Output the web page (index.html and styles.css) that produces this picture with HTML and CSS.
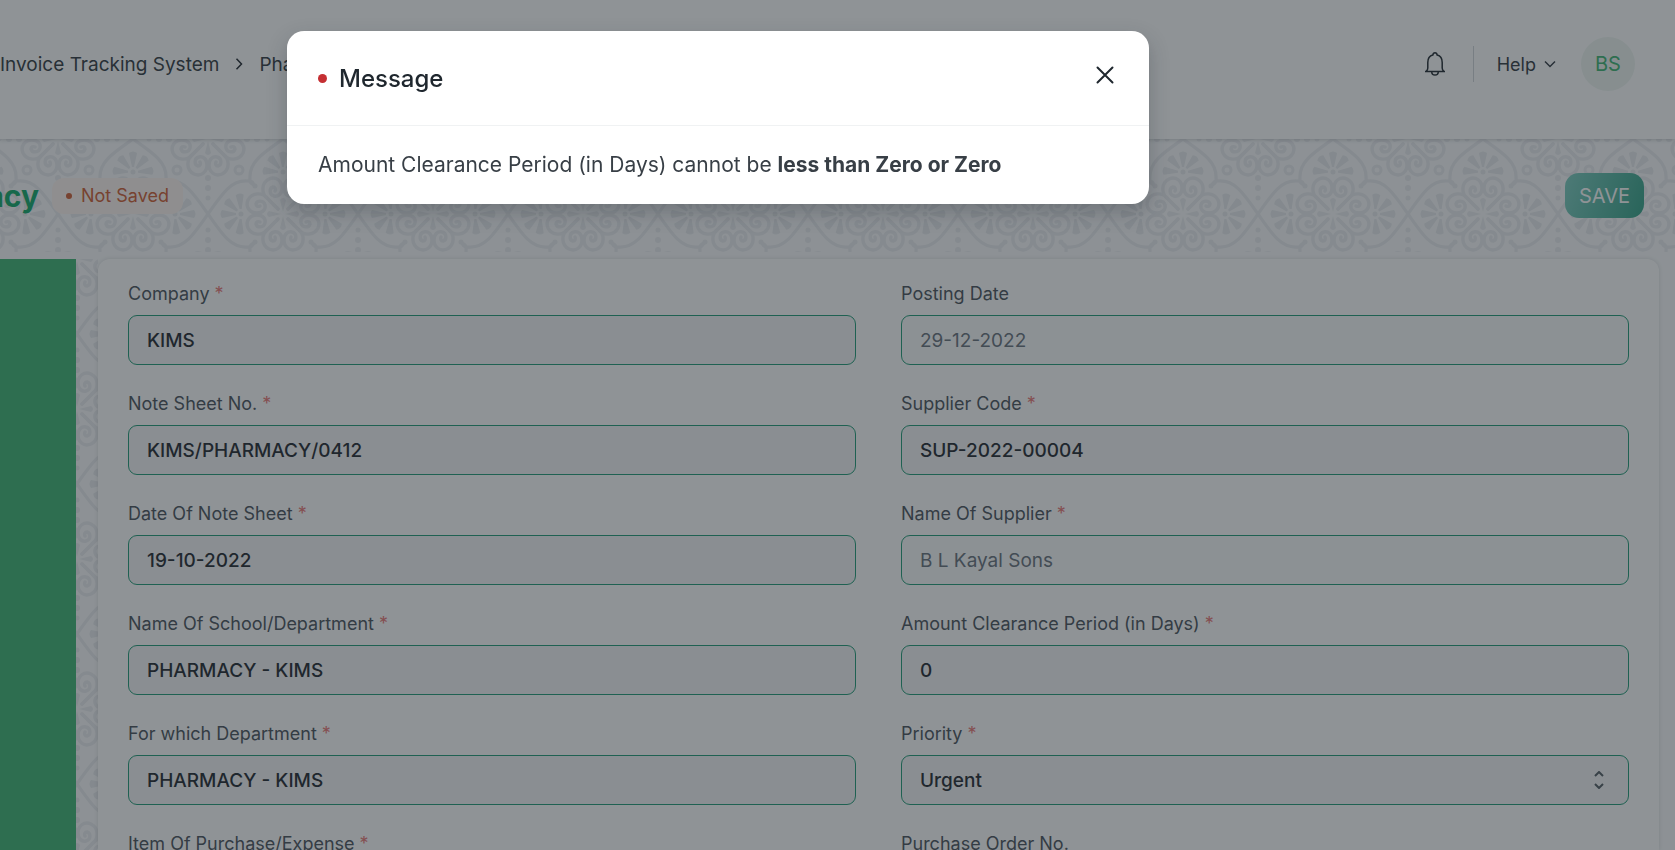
FILE: index.html
```html
<!DOCTYPE html>
<html lang="en">
<head>
<meta charset="utf-8">
<meta name="viewport" content="width=device-width, initial-scale=1">
<title>Invoice Tracking System</title>
<link rel="stylesheet" href="styles.css">
</head>
<body>
<div class="page">
  <header class="topbar">
    <nav class="breadcrumb" aria-label="Breadcrumb">
      <a href="#">Invoice Tracking System</a>
      <svg class="crumb-arrow" viewBox="0 0 8 14" aria-hidden="true"><path d="M1.5 1.8 6.5 7l-5 5.2"/></svg>
      <a href="#">Pharmacy</a>
    </nav>
    <div class="tools">
      <button class="bell" type="button" aria-label="Notifications">
        <svg viewBox="0 0 22 26" aria-hidden="true"><path d="M1 20.5h20M2.2 20.3c1.2-1 1.6-1.8 1.6-3.3v-5.6c0-3.600 1.600-6.400 5-7.300.2-1.500 1-2.300 2.200-2.300s2 .8 2.200 2.300c3.400.9 5 3.700 5 7.300V17c0 1.500.4 2.300 1.600 3.300M7.700 20.700a3.300 3.300 0 0 0 6.600 0"/></svg>
      </button>
      <span class="divider"></span>
      <button class="help" type="button">Help
        <svg viewBox="0 0 12 8" aria-hidden="true"><path d="M1 1.500l5 5 5-5"/></svg>
      </button>
      <button class="avatar" type="button">BS</button>
    </div>
  </header>

  <section class="page-head">
    <div class="head-left">
      <h1 class="title">acy</h1>
      <span class="status">Not Saved</span>
    </div>
    <button class="save" type="button">SAVE</button>
  </section>

  <main class="body">
    <aside class="sidebar"></aside>
    <div class="gutter"></div>
    <form class="card">
      <div class="field">
        <label for="company">Company <i>*</i></label>
        <input id="company" type="text" value="KIMS">
      </div>
      <div class="field">
        <label for="posting">Posting Date</label>
        <input id="posting" type="text" value="29-12-2022" readonly>
      </div>
      <div class="field">
        <label for="sheet">Note Sheet No. <i>*</i></label>
        <input id="sheet" type="text" value="KIMS/PHARMACY/0412">
      </div>
      <div class="field">
        <label for="supcode">Supplier Code <i>*</i></label>
        <input id="supcode" type="text" value="SUP-2022-00004">
      </div>
      <div class="field">
        <label for="sheetdate">Date Of Note Sheet <i>*</i></label>
        <input id="sheetdate" type="text" value="19-10-2022">
      </div>
      <div class="field">
        <label for="supname">Name Of Supplier <i>*</i></label>
        <input id="supname" type="text" value="B L Kayal Sons" readonly>
      </div>
      <div class="field">
        <label for="school">Name Of School/Department <i>*</i></label>
        <input id="school" type="text" value="PHARMACY - KIMS">
      </div>
      <div class="field">
        <label for="period">Amount Clearance Period (in Days) <i>*</i></label>
        <input id="period" type="text" value="0">
      </div>
      <div class="field">
        <label for="dept">For which Department <i>*</i></label>
        <input id="dept" type="text" value="PHARMACY - KIMS">
      </div>
      <div class="field">
        <label for="priority">Priority <i>*</i></label>
        <div class="select">
          <select id="priority"><option>Urgent</option></select>
          <svg viewBox="0 0 10 18" aria-hidden="true"><path d="M1 5l4-4 4 4M1 13l4 4 4-4"/></svg>
        </div>
      </div>
      <div class="field">
        <label for="item">Item Of Purchase/Expense <i>*</i></label>
        <input id="item" type="text">
      </div>
      <div class="field">
        <label for="po">Purchase Order No.</label>
        <input id="po" type="text">
      </div>
    </form>
  </main>
</div>

<div class="backdrop">
  <div class="dialog" role="dialog" aria-modal="true" aria-labelledby="dialog-title">
    <div class="dialog-head">
      <h2 id="dialog-title">Message</h2>
      <button class="close" type="button" aria-label="Close">
        <svg viewBox="0 0 18 18" aria-hidden="true"><path d="M1.500 1.500l15 15M16.500 1.500l-15 15"/></svg>
      </button>
    </div>
    <p class="dialog-text">Amount Clearance Period (in Days) cannot be <b>less than Zero or Zero</b></p>
  </div>
</div>
</body>
</html>
```

FILE: styles.css
```css
:root {
  --ink: #1f272e;
  --label: #48515a;
  --accent: #1f9b76;
  --ornament: url("data:image/svg+xml,%3Csvg xmlns='http://www.w3.org/2000/svg' xmlns:xlink='http://www.w3.org/1999/xlink' width='150' height='150' viewBox='0 0 150 150'%3E%3Cdefs%3E%3Cg id='h' fill='none' stroke='%23ebecf0' stroke-width='3.400' stroke-linecap='round'%3E%3Cpath d='M5-5 15-15C20-22 31-22 35-14C38-7 33-1 26-1C20-1 17-5 18-9C19-14 26-14 27-10C27-8 25-7 23-8'/%3E%3C/g%3E%3Cg id='a'%3E%3Cuse xlink:href='%23h'/%3E%3Cuse xlink:href='%23h' transform='scale(1 -1)'/%3E%3Cpath d='M2 0 14-3Q18 0 14 3Z' fill='%23ebecf0'/%3E%3C/g%3E%3Cg id='m'%3E%3Cuse xlink:href='%23a'/%3E%3Cuse xlink:href='%23a' transform='rotate(90)'/%3E%3Cuse xlink:href='%23a' transform='rotate(180)'/%3E%3Cuse xlink:href='%23a' transform='rotate(270)'/%3E%3C/g%3E%3Cpath id='p' d='M5-1 19-4Q22 0 19 4L5 1Z'/%3E%3Cg id='f'%3E%3Cg fill='%23e8eaee' transform='translate(42 0)'%3E%3Ccircle r='2.500'/%3E%3Cuse xlink:href='%23p'/%3E%3Cuse xlink:href='%23p' transform='rotate(42)'/%3E%3Cuse xlink:href='%23p' transform='rotate(-42)'/%3E%3Cuse xlink:href='%23p' transform='rotate(86)'/%3E%3Cuse xlink:href='%23p' transform='rotate(-86)'/%3E%3C/g%3E%3Cpath d='M29-28Q30-34 36-33C52-34 61-20 75 0C61 20 52 34 36 33Q30 34 29 28' fill='none' stroke='%23ebecf0' stroke-width='3.200'/%3E%3Ccircle cx='28' cy='-28' r='2.500' fill='%23ebecf0'/%3E%3Ccircle cx='44' cy='-44' r='4' fill='none' stroke='%23ebecf0' stroke-width='3'/%3E%3Cg fill='%23ebecf0'%3E%3Ccircle cx='75' cy='-36' r='3'/%3E%3Ccircle cx='75' cy='-26' r='3'/%3E%3Ccircle cx='75' cy='-16' r='2.500'/%3E%3Ccircle cx='75' cy='36' r='3'/%3E%3Ccircle cx='75' cy='26' r='3'/%3E%3Ccircle cx='75' cy='16' r='2.500'/%3E%3C/g%3E%3C/g%3E%3C/defs%3E%3Cuse xlink:href='%23m' x='75' y='75'/%3E%3Cuse xlink:href='%23m'/%3E%3Cuse xlink:href='%23m' x='150'/%3E%3Cuse xlink:href='%23m' y='150'/%3E%3Cuse xlink:href='%23m' x='150' y='150'/%3E%3Cg transform='translate(75 75)'%3E%3Cuse xlink:href='%23f'/%3E%3Cuse xlink:href='%23f' transform='rotate(90)'/%3E%3Cuse xlink:href='%23f' transform='rotate(180)'/%3E%3Cuse xlink:href='%23f' transform='rotate(270)'/%3E%3C/g%3E%3C/svg%3E");
}

* { box-sizing: border-box; }

body {
  margin: 0;
  height: 100vh;
  overflow: hidden;
  background: #fafbfc;
  color: var(--ink);
  font-family: Inter, "Noto Sans", sans-serif;
  font-size: 19px;
}

button, input, select { font: inherit; color: inherit; }
button { border: 0; background: none; padding: 0; }
svg { fill: none; stroke: currentColor; display: block; }

.page {
  height: 100vh;
  display: flex;
  flex-direction: column;
  overflow: hidden;
}

/* Top bar */
.topbar {
  flex: none;
  height: 139px;
  padding: 0 40px 11px 0;
  display: flex;
  align-items: center;
  justify-content: space-between;
  background: #fff;
  box-shadow: 0 1px 4px rgba(31, 39, 46, 0.2);
  position: relative;
}
.breadcrumb { display: flex; align-items: center; gap: 16px; }
.breadcrumb a { color: #313940; text-decoration: none; }
.crumb-arrow { width: 8px; height: 14px; stroke-width: 1.5; }
.tools { display: flex; align-items: center; }
.bell svg { width: 22px; height: 26px; stroke-width: 1.5; }
.divider { width: 1px; height: 36px; margin: 0 23px 0 27px; background: #d1d5d9; }
.help { display: flex; align-items: center; gap: 8px; font-size: 18px; color: #313940; }
.help svg { width: 12px; height: 8px; stroke-width: 1.5; }
.avatar {
  width: 54px;
  height: 54px;
  margin-left: 25px;
  border-radius: 50%;
  background: #eef5f1;
  color: #3db572;
  font-size: 20px;
}

/* Page heading */
.page-head {
  flex: none;
  height: 113px;
  padding: 0 31px 0 0;
  display: flex;
  align-items: center;
  justify-content: space-between;
  background: var(--ornament) 58px 0;
}
.head-left { display: flex; align-items: center; gap: 13px; }
.title {
  width: 39px;
  margin: 0;
  display: flex;
  justify-content: flex-end;
  font-size: 30px;
  font-weight: 700;
  color: #0fa968;
}
.status {
  display: flex;
  align-items: center;
  gap: 9px;
  height: 36px;
  padding: 0 14px;
  border-radius: 12px;
  background: #fff5f0;
  color: #cf5c32;
  font-size: 18px;
}
.status::before {
  content: "";
  width: 6px;
  height: 6px;
  border-radius: 50%;
  background: currentColor;
}
.save {
  width: 79px;
  height: 45px;
  border-radius: 14px;
  background: linear-gradient(110deg, #7bcdc0, #31a186);
  color: #fff;
  font-size: 20px;
}

/* Form area */
.body {
  flex: 1;
  min-height: 0;
  margin-top: 7px;
  padding-right: 16px;
  display: flex;
}
.sidebar { width: 76px; background: #3db572; }
.gutter { width: 22px; background: var(--ornament) 1px 0; }
.card {
  flex: 1;
  padding: 21px 30px;
  display: grid;
  grid-template-columns: 1fr 1fr;
  align-content: start;
  gap: 25px 45px;
  border-radius: 12px 12px 0 0;
  background: #fff;
  box-shadow: 0 0 4px rgba(31, 39, 46, 0.15);
}
.field { display: flex; flex-direction: column; gap: 7px; }
.field label { font-size: 18px; line-height: 28px; color: var(--label); }
.field i { font-style: normal; color: #ea7675; }
.field input,
.field select {
  width: 100%;
  height: 50px;
  padding: 0 18px;
  border: 1px solid var(--accent);
  border-radius: 9px;
  background: #f4f5f6;
  color: var(--ink);
  font-weight: 500;
  appearance: none;
}
.field input[readonly] { background: #f9fafa; color: #66707a; font-weight: 400; }
.select { display: flex; align-items: center; }
.select svg { width: 10px; height: 18px; margin-left: -35px; stroke: #505a62; stroke-width: 2; }

/* Message dialog */
.backdrop {
  position: fixed;
  inset: 0;
  padding-top: 31px;
  display: flex;
  justify-content: center;
  align-items: flex-start;
  background: rgba(31, 39, 46, 0.5);
}
.dialog {
  width: 862px;
  margin-right: 239px;
  border-radius: 17px;
  background: #fff;
  box-shadow: 0 8px 20px rgba(31, 39, 46, 0.25);
}
.dialog-head {
  height: 95px;
  padding: 0 35px 0 31px;
  display: flex;
  align-items: center;
  justify-content: space-between;
  border-bottom: 1px solid #f0f2f3;
}
.dialog-head h2 {
  margin: 0;
  display: flex;
  align-items: center;
  gap: 12px;
  font-size: 24px;
  font-weight: 500;
}
.dialog-head h2::before {
  content: "";
  width: 9px;
  height: 9px;
  border-radius: 50%;
  background: #c52f33;
}
.close { padding-bottom: 6px; }
.close svg { width: 18px; height: 18px; stroke-width: 2; stroke-linecap: round; }
.dialog-text {
  margin: 0;
  padding: 23px 31px;
  font-size: 21px;
  line-height: 32px;
  color: #383f46;
}
.dialog-text b { font-weight: 700; }
```
